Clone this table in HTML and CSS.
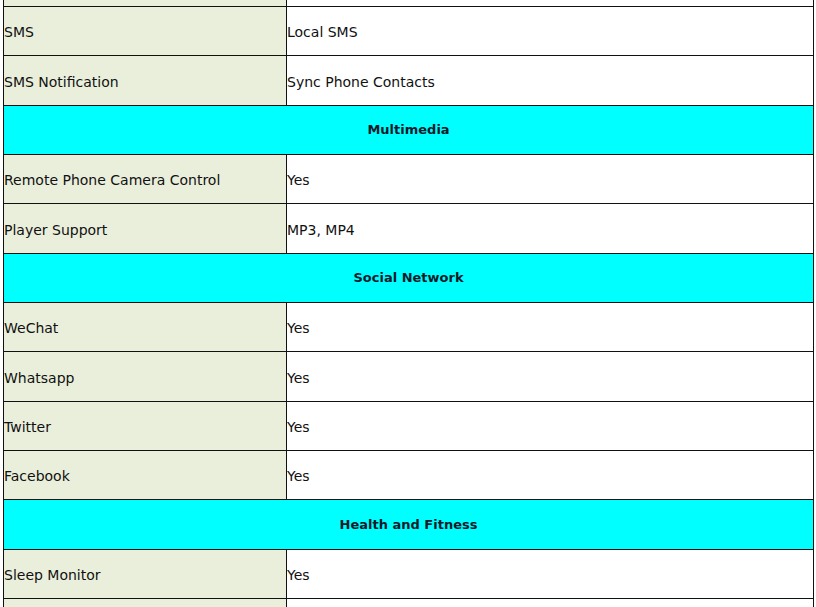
FILE: index.html
```html
<!DOCTYPE html>
<html>
<head>
<meta charset="utf-8">
<link rel="stylesheet" href="styles.css">
</head>
<body>
<table class="spec">
  <tr><td class="label">Calls</td><td class="value">Bluetooth Calls</td></tr>
  <tr><td class="label">SMS</td><td class="value">Local SMS</td></tr>
  <tr><td class="label">SMS Notification</td><td class="value">Sync Phone Contacts</td></tr>
  <tr><th class="section" colspan="2">Multimedia</th></tr>
  <tr><td class="label">Remote Phone Camera Control</td><td class="value">Yes</td></tr>
  <tr><td class="label">Player Support</td><td class="value">MP3, MP4</td></tr>
  <tr><th class="section" colspan="2">Social Network</th></tr>
  <tr><td class="label">WeChat</td><td class="value">Yes</td></tr>
  <tr><td class="label">Whatsapp</td><td class="value">Yes</td></tr>
  <tr><td class="label">Twitter</td><td class="value">Yes</td></tr>
  <tr><td class="label">Facebook</td><td class="value">Yes</td></tr>
  <tr><th class="section" colspan="2">Health and Fitness</th></tr>
  <tr><td class="label">Sleep Monitor</td><td class="value">Yes</td></tr>
  <tr><td class="label">Pedometer</td><td class="value">Yes</td></tr>
</table>
</body>
</html>
```

FILE: styles.css
```css
html, body {
  margin: 0;
  padding: 0;
  background: #ffffff;
}
body {
  font-family: "DejaVu Sans", Verdana, sans-serif;
  font-size: 14px;
  color: #111111;
}
.spec {
  border-collapse: collapse;
  width: 811px;
  margin: -43.2px 0 0 3px;
  table-layout: fixed;
}
.spec td, .spec th {
  border: 1px solid #111111;
  padding: 0;
  height: 48.333px;
  line-height: 16px;
  vertical-align: middle;
}
.spec td {
  padding-top: 2px;
  height: 46.333px;
}
.label {
  width: 282px;
  background: #eaefdc;
  text-align: left;
}
.value {
  background: #ffffff;
  text-align: left;
}
.spec .section {
  background: #00ffff;
  text-align: center;
  font-weight: bold;
  font-size: 13px;
  color: #0f1a2a;
}
```
